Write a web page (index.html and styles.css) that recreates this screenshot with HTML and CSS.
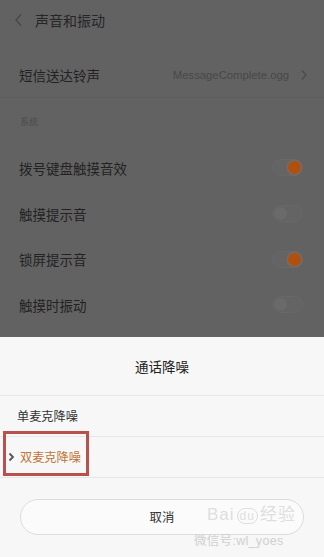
FILE: index.html
```html
<!DOCTYPE html>
<html lang="zh">
<head>
<meta charset="utf-8">
<link rel="stylesheet" href="styles.css">
</head>
<body>
<div class="screen">
  <div class="settings">
    <div class="header">
      <svg class="back" width="10" height="14" viewBox="0 0 10 14"><path d="M7 1.5 L2 7 L7 12.5" fill="none" stroke="#474747" stroke-width="1.3"/></svg>
      <span class="title">声音和振动</span>
    </div>
    <div class="row first">
      <span class="label">短信送达铃声</span>
      <span class="value">MessageComplete.ogg</span>
      <svg class="chev" width="8" height="12" viewBox="0 0 8 12"><path d="M2 1.5 L6 6 L2 10.5" fill="none" stroke="#4c4c4c" stroke-width="1.4"/></svg>
    </div>
    <div class="section">系统</div>
    <div class="row">
      <span class="label">拨号键盘触摸音效</span>
      <span class="toggle on"><span class="knob"></span></span>
    </div>
    <div class="row">
      <span class="label">触摸提示音</span>
      <span class="toggle"><span class="knob"></span></span>
    </div>
    <div class="row">
      <span class="label">锁屏提示音</span>
      <span class="toggle on"><span class="knob"></span></span>
    </div>
    <div class="row">
      <span class="label">触摸时振动</span>
      <span class="toggle"><span class="knob"></span></span>
    </div>
  </div>
  <div class="sheet">
    <div class="sheet-title">通话降噪</div>
    <div class="option">单麦克降噪</div>
    <div class="option selected">
      <svg class="sel-chev" width="7" height="10" viewBox="0 0 7 10"><path d="M1.5 1.5 L5 5 L1.5 8.5" fill="none" stroke="#555" stroke-width="1.8"/></svg>双麦克降噪
      <span class="mark"></span>
    </div>
    <div class="btn-wrap">
      <div class="cancel">取消</div>
    </div>
    <div class="wm wm1">Bai<span class="du">du</span>经验</div>
    <div class="wm wm2">微信号:wl_yoes</div>
  </div>
</div>
</body>
</html>
```
FILE: styles.css
```css
* { box-sizing: border-box; }
html, body { margin: 0; padding: 0; }
body {
  width: 324px;
  height: 557px;
  overflow: hidden;
  font-family: "Noto Sans CJK SC", "Noto Sans", sans-serif;
  background: #f7f7f7;
}
.screen {
  display: flex;
  flex-direction: column;
  height: 557px;
}
.settings {
  height: 337px;
  background: #626262;
  display: flex;
  flex-direction: column;
  color: #232323;
}
.header {
  height: 40px;
  display: flex;
  align-items: center;
  padding-left: 14px;
  gap: 11px;
}
.title {
  font-size: 14px;
  color: #262626;
}
.row {
  height: 45.7px;
  display: flex;
  align-items: center;
  padding: 0 22px 0 19px;
  position: relative;
}
.row.first {
  margin-top: 12px;
  height: 46px;
  border-bottom: 1px solid #5c5c5c;
}
.label {
  font-size: 13.5px;
  flex: 1;
  color: #222;
}
.value {
  font-family: "Liberation Sans", sans-serif;
  font-size: 11.3px;
  color: #484848;
  margin-right: 11px;
}
.chev { margin-right: -6px; }
.section {
  height: 47px;
  display: flex;
  align-items: center;
  padding-left: 20px;
  font-size: 9px;
  color: #4c4c4c;
}
.toggle {
  width: 31px;
  height: 17px;
  border-radius: 9px;
  background: #646464;
  border: 1px solid #686868;
  display: flex;
  align-items: center;
  padding: 0 1px;
  margin-right: -1px;
}
.toggle .knob {
  width: 13px;
  height: 13px;
  border-radius: 50%;
  background: #6a6a6a;
}
.toggle.on { justify-content: flex-end; }
.toggle.on .knob {
  background: #b0500f;
  box-shadow: 0 0 0 1.5px #786a62;
}
.sheet {
  flex: 1;
  background: #f7f7f7;
  display: flex;
  flex-direction: column;
  position: relative;
}
.sheet-title {
  height: 59px;
  display: flex;
  align-items: center;
  justify-content: center;
  font-size: 13.5px;
  color: #222;
  border-bottom: 1px solid #e6e6e6;
}
.option {
  height: 41px;
  display: flex;
  align-items: center;
  padding-left: 17px;
  font-size: 12.2px;
  color: #333;
  border-bottom: 1px solid #e6e6e6;
  position: relative;
}
.option.selected {
  color: #c27436;
  padding-left: 8px;
}
.sel-chev {
  margin-right: 5px;
}
.mark {
  position: absolute;
  left: 3px;
  top: -6px;
  width: 86px;
  height: 45px;
  border: 3px solid #b8504c;
}
.btn-wrap {
  padding: 21px 20px 0 20px;
}
.cancel {
  height: 36px;
  border: 1px solid #dcdcdc;
  border-radius: 18px;
  background: #fbfbfb;
  display: flex;
  align-items: center;
  justify-content: center;
  font-size: 12.4px;
  color: #333;
}
.wm {
  position: absolute;
  color: #dedede;
  font-family: "Liberation Sans", "Noto Sans CJK SC", sans-serif;
}
.wm1 {
  left: 207px;
  top: 163px;
  font-size: 17px;
  letter-spacing: 1px;
}
.wm1 .du {
  font-size: 12px;
  border: 1px solid #dedede;
  border-radius: 8px;
  padding: 0 2px;
  margin: 0 2px;
}
.wm2 {
  left: 194px;
  top: 193px;
  font-size: 12.5px;
  color: #d0d0d0;
  letter-spacing: 0.3px;
}
```
